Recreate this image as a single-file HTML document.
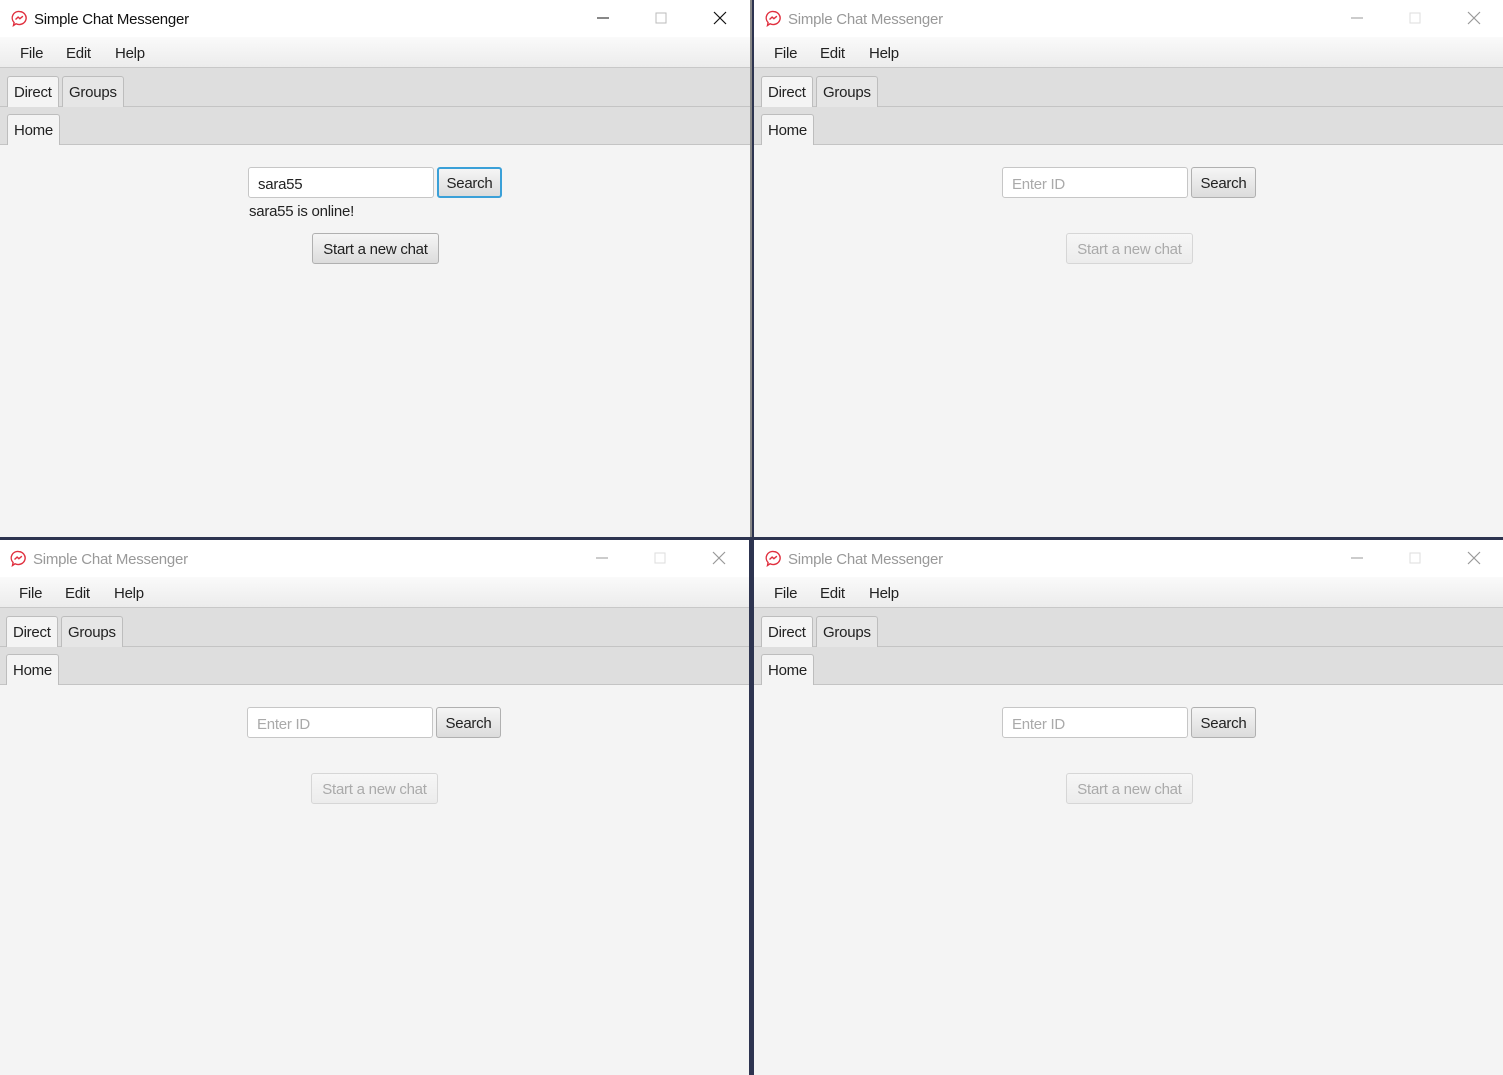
<!DOCTYPE html>
<html><head><meta charset="utf-8"><style>
*{box-sizing:border-box;margin:0;padding:0}
body{width:1503px;height:1075px;background:#2d3450;position:relative;overflow:hidden;font-family:"Liberation Sans",sans-serif;font-size:15px;letter-spacing:-0.25px;color:#222}
.w{position:absolute;width:750px;background:#f4f4f4;overflow:hidden}
.t{position:absolute;left:0;top:0;right:0;height:37px;background:#fff}
.t .n{position:absolute;left:34px;top:11px;font-size:15px;color:#111}
.in .t .n{color:#999}
.ic{position:absolute;left:11px;top:10px}
.ctl{position:absolute;top:10px;width:16px;height:16px}
.m{position:absolute;left:0;right:0;top:37px;height:31px;background:linear-gradient(#fafafa,#ececec);border-bottom:1px solid #c8c8c8}
.m span{position:absolute;top:8px}
.r1{position:absolute;left:0;right:0;top:68px;height:39px;background:#dedede;border-bottom:1px solid #c4c4c4}
.r2{position:absolute;left:0;right:0;top:107px;height:38px;background:#dedede;border-bottom:1px solid #c4c4c4}
.tab{position:absolute;border:1px solid #bdbdbd;border-bottom:none;border-radius:3px 3px 0 0;padding:7px 6px 0;height:31px;background:#e6e6e6}
.tab.s{background:#f4f4f4;height:31px}
.tf{position:absolute;top:167px;width:186px;height:31px;background:#fff;border:1px solid #c6c6c6;border-radius:3px;padding:8px 9px 0;}
.ph{color:#aaa}
.b{position:absolute;height:31px;border:1px solid #b0b0b0;border-radius:3px;background:linear-gradient(#f5f5f5,#dcdcdc);text-align:center;padding-top:7px}
.b.f{border:2px solid #3aa0d8;padding-top:6px}
.b.d{color:#aaa;border-color:#d6d6d6;background:linear-gradient(#f6f6f6,#ececec)}
</style></head><body>

<div class="w" style="left:0;top:0;height:537px;border-right:2px solid #888;width:752px">
 <div class="t"><svg class="ic" width="17" height="17" viewBox="0 0 17 17"><path d="M8.5 1.5a7 6.5 0 1 1-3.5 12.3L2.5 15.5l.6-3A6.5 6.5 0 0 1 8.5 1.5z" fill="none" stroke="#e0303f" stroke-width="1.4"/><path d="M4.5 9.5l2.6-2.4 1.8 1.6 3-2.5" fill="none" stroke="#e0303f" stroke-width="1.4"/></svg><span class="n">Simple Chat Messenger</span>
 <svg class="ctl" style="left:595px" viewBox="0 0 16 16"><path d="M2 8h12" stroke="#111"/></svg>
 <svg class="ctl" style="left:653px" viewBox="0 0 16 16"><rect x="3" y="3" width="10" height="10" fill="none" stroke="#bbb"/></svg>
 <svg class="ctl" style="left:712px" viewBox="0 0 16 16"><path d="M2 2l12 12M14 2L2 14" stroke="#111" stroke-width="1.2"/></svg></div>
 <div class="m"><span style="left:20px">File</span><span style="left:66px">Edit</span><span style="left:115px">Help</span></div>
 <div class="r1"><div class="tab s" style="left:7px;top:8px">Direct</div><div class="tab" style="left:62px;top:8px">Groups</div></div>
 <div class="r2"><div class="tab s" style="left:7px;top:7px">Home</div></div>
 <div class="tf" style="left:248px">sara55</div>
 <div class="b f" style="left:437px;top:167px;width:65px">Search</div>
 <div style="position:absolute;left:249px;top:203px">sara55 is online!</div>
 <div class="b" style="left:312px;top:233px;width:127px">Start a new chat</div>
</div>

<div class="w in" style="left:754px;top:0;height:537px">
 <div class="t"><svg class="ic" width="17" height="17" viewBox="0 0 17 17"><path d="M8.5 1.5a7 6.5 0 1 1-3.5 12.3L2.5 15.5l.6-3A6.5 6.5 0 0 1 8.5 1.5z" fill="none" stroke="#e0303f" stroke-width="1.4"/><path d="M4.5 9.5l2.6-2.4 1.8 1.6 3-2.5" fill="none" stroke="#e0303f" stroke-width="1.4"/></svg><span class="n">Simple Chat Messenger</span>
 <svg class="ctl" style="left:595px" viewBox="0 0 16 16"><path d="M2 8h12" stroke="#999"/></svg>
 <svg class="ctl" style="left:653px" viewBox="0 0 16 16"><rect x="3" y="3" width="10" height="10" fill="none" stroke="#ddd"/></svg>
 <svg class="ctl" style="left:712px" viewBox="0 0 16 16"><path d="M2 2l12 12M14 2L2 14" stroke="#999" stroke-width="1.2"/></svg></div>
 <div class="m"><span style="left:20px">File</span><span style="left:66px">Edit</span><span style="left:115px">Help</span></div>
 <div class="r1"><div class="tab s" style="left:7px;top:8px">Direct</div><div class="tab" style="left:62px;top:8px">Groups</div></div>
 <div class="r2"><div class="tab s" style="left:7px;top:7px">Home</div></div>
 <div class="tf ph" style="left:248px">Enter ID</div>
 <div class="b" style="left:437px;top:167px;width:65px">Search</div>
 <div class="b d" style="left:312px;top:233px;width:127px">Start a new chat</div>
</div>

<div class="w in" style="left:-1px;top:540px;height:535px">
 <div class="t"><svg class="ic" width="17" height="17" viewBox="0 0 17 17"><path d="M8.5 1.5a7 6.5 0 1 1-3.5 12.3L2.5 15.5l.6-3A6.5 6.5 0 0 1 8.5 1.5z" fill="none" stroke="#e0303f" stroke-width="1.4"/><path d="M4.5 9.5l2.6-2.4 1.8 1.6 3-2.5" fill="none" stroke="#e0303f" stroke-width="1.4"/></svg><span class="n">Simple Chat Messenger</span>
 <svg class="ctl" style="left:595px" viewBox="0 0 16 16"><path d="M2 8h12" stroke="#999"/></svg>
 <svg class="ctl" style="left:653px" viewBox="0 0 16 16"><rect x="3" y="3" width="10" height="10" fill="none" stroke="#ddd"/></svg>
 <svg class="ctl" style="left:712px" viewBox="0 0 16 16"><path d="M2 2l12 12M14 2L2 14" stroke="#999" stroke-width="1.2"/></svg></div>
 <div class="m"><span style="left:20px">File</span><span style="left:66px">Edit</span><span style="left:115px">Help</span></div>
 <div class="r1"><div class="tab s" style="left:7px;top:8px">Direct</div><div class="tab" style="left:62px;top:8px">Groups</div></div>
 <div class="r2"><div class="tab s" style="left:7px;top:7px">Home</div></div>
 <div class="tf ph" style="left:248px">Enter ID</div>
 <div class="b" style="left:437px;top:167px;width:65px">Search</div>
 <div class="b d" style="left:312px;top:233px;width:127px">Start a new chat</div>
</div>

<div class="w in" style="left:754px;top:540px;height:535px">
 <div class="t"><svg class="ic" width="17" height="17" viewBox="0 0 17 17"><path d="M8.5 1.5a7 6.5 0 1 1-3.5 12.3L2.5 15.5l.6-3A6.5 6.5 0 0 1 8.5 1.5z" fill="none" stroke="#e0303f" stroke-width="1.4"/><path d="M4.5 9.5l2.6-2.4 1.8 1.6 3-2.5" fill="none" stroke="#e0303f" stroke-width="1.4"/></svg><span class="n">Simple Chat Messenger</span>
 <svg class="ctl" style="left:595px" viewBox="0 0 16 16"><path d="M2 8h12" stroke="#999"/></svg>
 <svg class="ctl" style="left:653px" viewBox="0 0 16 16"><rect x="3" y="3" width="10" height="10" fill="none" stroke="#ddd"/></svg>
 <svg class="ctl" style="left:712px" viewBox="0 0 16 16"><path d="M2 2l12 12M14 2L2 14" stroke="#999" stroke-width="1.2"/></svg></div>
 <div class="m"><span style="left:20px">File</span><span style="left:66px">Edit</span><span style="left:115px">Help</span></div>
 <div class="r1"><div class="tab s" style="left:7px;top:8px">Direct</div><div class="tab" style="left:62px;top:8px">Groups</div></div>
 <div class="r2"><div class="tab s" style="left:7px;top:7px">Home</div></div>
 <div class="tf ph" style="left:248px">Enter ID</div>
 <div class="b" style="left:437px;top:167px;width:65px">Search</div>
 <div class="b d" style="left:312px;top:233px;width:127px">Start a new chat</div>
</div>
</body></html>
